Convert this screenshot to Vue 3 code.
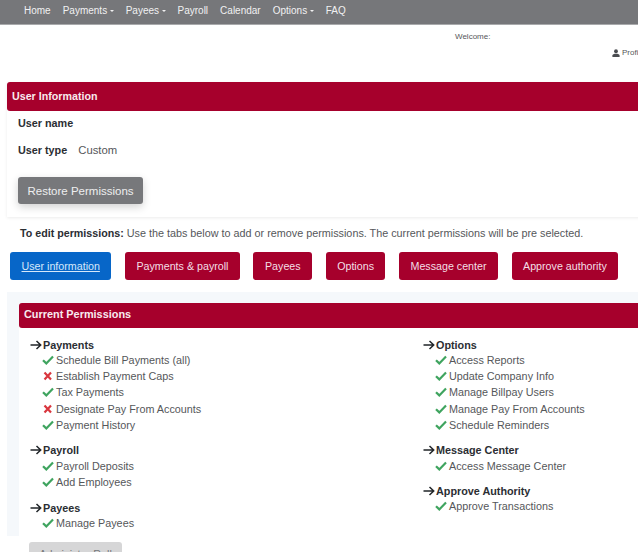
<script setup>
const nav = [
  { t: 'Home' }, { t: 'Payments', c: 1 }, { t: 'Payees', c: 1 }, { t: 'Payroll' },
  { t: 'Calendar' }, { t: 'Options', c: 1 }, { t: 'FAQ' }
]
const tabs = ['Payments & payroll', 'Payees', 'Options', 'Message center', 'Approve authority']
const left = [
  { h: 'Payments', items: [['Schedule Bill Payments (all)', 1], ['Establish Payment Caps', 0], ['Tax Payments', 1], ['Designate Pay From Accounts', 0], ['Payment History', 1]] },
  { h: 'Payroll', items: [['Payroll Deposits', 1], ['Add Employees', 1]] },
  { h: 'Payees', items: [['Manage Payees', 1]] }
]
const right = [
  { h: 'Options', items: [['Access Reports', 1], ['Update Company Info', 1], ['Manage Billpay Users', 1], ['Manage Pay From Accounts', 1], ['Schedule Reminders', 1]] },
  { h: 'Message Center', items: [['Access Message Center', 1]] },
  { h: 'Approve Authority', items: [['Approve Transactions', 1]] }
]
const cols = [left, right]
</script>

<template>
  <div class="page">
    <nav class="nav">
      <a v-for="n in nav" :key="n.t" class="nav-item">{{ n.t }}<i v-if="n.c" class="caret"></i></a>
    </nav>
    <div class="welcome">Welcome:</div>
    <div class="profile">
      <svg class="user" viewBox="0 0 10 10" width="8" height="8"><circle cx="5" cy="2.8" r="2.4" fill="#4a4c50"/><path d="M0.5 10V8.2C0.5 6.6 2.5 5.8 5 5.8s4.500.8 4.5 2.4V10z" fill="#4a4c50"/></svg>
      <span>Profile</span>
    </div>

    <section class="card">
      <header class="bar bar-top">User Information</header>
      <div class="card-body">
        <div class="line first"><b>User name</b></div>
        <div class="line second"><b>User type</b><span class="val">Custom</span></div>
        <button class="restore">Restore Permissions</button>
      </div>
    </section>

    <p class="intro"><b>To edit permissions:</b> Use the tabs below to add or remove permissions. The current permissions will be pre selected.</p>

    <div class="tabs">
      <a class="tab active">User information</a>
      <a v-for="t in tabs" :key="t" class="tab">{{ t }}</a>
    </div>

    <section class="panel">
      <header class="bar bar-perm">Current Permissions</header>
      <div class="cols">
        <div v-for="(col, i) in cols" :key="i" class="col">
          <div v-for="g in col" :key="g.h" class="group">
            <div class="gh">
              <svg viewBox="0 0 12 10" width="12" height="10"><path d="M0.500 5H10.500M6.500 1L10.700 5L6.500 9" fill="none" stroke="#212529" stroke-width="1.500"/></svg>
              <b>{{ g.h }}</b>
            </div>
            <div v-for="it in g.items" :key="it[0]" class="item">
              <svg v-if="it[1]" class="mark" viewBox="0 0 12 10" width="12" height="10"><path d="M1 5.200L4.300 8.400L11 1.500" fill="none" stroke="#3fa45f" stroke-width="2.200"/></svg>
              <svg v-else class="mark" viewBox="0 0 12 10" width="12" height="10"><path d="M2.500 1.500L9 8.500M9 1.500L2.500 8.500" fill="none" stroke="#d9363e" stroke-width="2.200"/></svg>
              <span>{{ it[0] }}</span>
            </div>
          </div>
        </div>
      </div>
    </section>

    <button class="admin">Administer Roll</button>
  </div>
</template>

<style>
html, body { margin: 0; overflow: hidden; background: #fff; }
</style>

<style scoped>
.page {
  position: relative;
  width: 638px;
  height: 552px;
  overflow: hidden;
  font-family: "Liberation Sans", Arial, sans-serif;
  font-size: 11px;
  color: #495057;
  background: #fff;
}
.nav {
  height: 24px;
  background: #76777a;
  border-bottom: 1px solid #a9aaac;
  display: flex;
  align-items: center;
  gap: 12px;
  padding-left: 24px;
}
.nav-item { color: #f1f1f2; font-size: 10px; display: flex; align-items: center; padding-bottom: 3px; }
.caret {
  display: inline-block;
  margin-left: 2.500px;
  border-left: 2px solid transparent;
  border-right: 2px solid transparent;
  border-top: 2px solid #f1f1f2;
}
.welcome { font-size: 8px; color: #55575a; margin: 6px 0 0 455px; line-height: 12px; }
.profile {
  font-size: 8px; color: #55575a; margin: 4px 0 0 612px; line-height: 12px;
  display: flex; align-items: center; gap: 2px; white-space: nowrap;
}
.user { flex: none; }
.card {
  width: 680px;
  margin: 23px 0 0 7px;
  height: 135px;
  box-shadow: 0 1px 3px rgba(0, 0, 0, .08);
}
.bar {
  background: #a6002c;
  color: #f8eaee;
  font-weight: 700;
  display: flex;
  align-items: center;
  border-radius: 3px 0 0 3px;
}
.bar-top { height: 29px; padding: 0 0 2px 5px; box-sizing: border-box; font-size: 10.700px; }
.card-body { padding-left: 11px; color: #212529; }
.line { line-height: 14px; }
.line b { font-size: 10.800px; color: #2b2e33; }
.first { padding-top: 5px; }
.second { padding-top: 13px; }
.val { margin-left: 11px; color: #55575a; font-size: 11.300px; }
.restore {
  display: block;
  margin-top: 20px;
  width: 125px;
  height: 27px;
  border: 0;
  border-radius: 3px;
  background: #77787b;
  color: #eeeeef;
  font: 11.500px "Liberation Sans", Arial, sans-serif;
  padding: 0;
  box-shadow: 0 3px 8px rgba(0, 0, 0, .18);
}
.intro { margin: 9px 0 0 20px; font-size: 10.800px; line-height: 14px; white-space: nowrap; color: #55575a; }
.intro b { color: #2b2e33; font-size: 10.700px; }
.tabs { display: flex; gap: 13.500px; margin: 12px 0 0 10px; }
.tab {
  height: 28px;
  box-sizing: border-box;
  padding: 0 11.500px;
  display: flex;
  align-items: center;
  border-radius: 3px;
  background: #a6002c;
  color: #f3dfe5;
  font-size: 10.700px;
  white-space: nowrap;
}
.tab.active { background: #0766c8; color: #d6e8fa; text-decoration: underline; }
.panel {
  width: 680px;
  height: 233px;
  margin: 12px 0 0 7px;
  padding: 11px 0 0 12px;
  background:
    linear-gradient(#f5f8fb, #f5f8fb) 0 0 / 100% 11px no-repeat,
    linear-gradient(#f5f8fb, #f5f8fb) 0 0 / 12px 100% no-repeat,
    #fff;
}
.bar-perm { height: 25px; padding: 0 0 3px 5px; box-sizing: border-box; font-size: 10.900px; }
.cols { display: flex; padding: 9.500px 0 0 11px; }
.col { flex: none; }
.col:first-child { width: 393px; }
.group { margin-bottom: 10.500px; }
.gh {
  display: flex; align-items: center; gap: 1px;
  height: 14px;
  color: #2b2e33;
  font-size: 10.800px;
}
.item {
  display: flex; align-items: center; gap: 2px;
  height: 16.300px;
  margin-left: 12px;
  font-size: 10.800px;
  color: #55575a;
  white-space: nowrap;
}
.mark { flex: none; }
.admin {
  position: absolute;
  left: 29px;
  top: 542px;
  width: 93px;
  height: 24px;
  border: 0;
  border-radius: 3px;
  background: #d6d6d7;
  color: #77787b;
  font: 10.800px "Liberation Sans", Arial, sans-serif;
  padding: 0;
}
</style>
